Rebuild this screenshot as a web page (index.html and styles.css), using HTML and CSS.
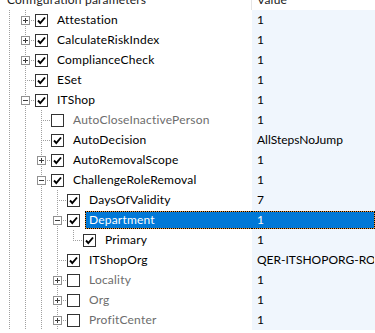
FILE: index.html
```html
<!DOCTYPE html>
<html>
<head>
<meta charset="utf-8">
<link rel="stylesheet" href="styles.css">
</head>
<body>
<div class="grid">
  <div class="row header">
    <div class="c1 hc1">Configuration parameters</div>
    <div class="c2 hc2">Value</div>
  </div>

  <div class="row">
    <div class="c1"><span class="ind v"></span><span class="own t"><svg class="exp" width="9" height="9"><rect x=".5" y=".5" width="8" height="8"/><path d="M2 4.5H7M4.5 2V7"/></svg></span><svg class="cb" width="13" height="13"><rect x=".5" y=".5" width="12" height="12"/><polyline points="3,6.5 5.3,9 10,3.5"/></svg><span class="lbl">Attestation</span></div>
    <div class="c2"><span class="val">1</span></div>
  </div>
  <div class="row">
    <div class="c1"><span class="ind v"></span><span class="own t"><svg class="exp" width="9" height="9"><rect x=".5" y=".5" width="8" height="8"/><path d="M2 4.5H7M4.5 2V7"/></svg></span><svg class="cb" width="13" height="13"><rect x=".5" y=".5" width="12" height="12"/><polyline points="3,6.5 5.3,9 10,3.5"/></svg><span class="lbl">CalculateRiskIndex</span></div>
    <div class="c2"><span class="val">1</span></div>
  </div>
  <div class="row">
    <div class="c1"><span class="ind v"></span><span class="own t"><svg class="exp" width="9" height="9"><rect x=".5" y=".5" width="8" height="8"/><path d="M2 4.5H7M4.5 2V7"/></svg></span><svg class="cb" width="13" height="13"><rect x=".5" y=".5" width="12" height="12"/><polyline points="3,6.5 5.3,9 10,3.5"/></svg><span class="lbl">ComplianceCheck</span></div>
    <div class="c2"><span class="val">1</span></div>
  </div>
  <div class="row">
    <div class="c1"><span class="ind v"></span><span class="own t"></span><svg class="cb" width="13" height="13"><rect x=".5" y=".5" width="12" height="12"/><polyline points="3,6.5 5.3,9 10,3.5"/></svg><span class="lbl">ESet</span></div>
    <div class="c2"><span class="val">1</span></div>
  </div>
  <div class="row">
    <div class="c1"><span class="ind v"></span><span class="own t"><svg class="exp" width="9" height="9"><rect x=".5" y=".5" width="8" height="8"/><path d="M2 4.5H7"/></svg></span><svg class="cb" width="13" height="13"><rect x=".5" y=".5" width="12" height="12"/><polyline points="3,6.5 5.3,9 10,3.5"/></svg><span class="lbl">ITShop</span></div>
    <div class="c2"><span class="val">1</span></div>
  </div>

  <div class="row">
    <div class="c1"><span class="ind v"></span><span class="ind v"></span><span class="own t"></span><svg class="cb" width="13" height="13"><rect x=".5" y=".5" width="12" height="12"/></svg><span class="lbl dis">AutoCloseInactivePerson</span></div>
    <div class="c2"><span class="val">1</span></div>
  </div>
  <div class="row">
    <div class="c1"><span class="ind v"></span><span class="ind v"></span><span class="own t"></span><svg class="cb" width="13" height="13"><rect x=".5" y=".5" width="12" height="12"/><polyline points="3,6.5 5.3,9 10,3.5"/></svg><span class="lbl">AutoDecision</span></div>
    <div class="c2"><span class="val">AllStepsNoJump</span></div>
  </div>
  <div class="row">
    <div class="c1"><span class="ind v"></span><span class="ind v"></span><span class="own t"><svg class="exp" width="9" height="9"><rect x=".5" y=".5" width="8" height="8"/><path d="M2 4.5H7M4.5 2V7"/></svg></span><svg class="cb" width="13" height="13"><rect x=".5" y=".5" width="12" height="12"/><polyline points="3,6.5 5.3,9 10,3.5"/></svg><span class="lbl">AutoRemovalScope</span></div>
    <div class="c2"><span class="val">1</span></div>
  </div>
  <div class="row">
    <div class="c1"><span class="ind v"></span><span class="ind v"></span><span class="own t"><svg class="exp" width="9" height="9"><rect x=".5" y=".5" width="8" height="8"/><path d="M2 4.5H7"/></svg></span><svg class="cb" width="13" height="13"><rect x=".5" y=".5" width="12" height="12"/><polyline points="3,6.5 5.3,9 10,3.5"/></svg><span class="lbl">ChallengeRoleRemoval</span></div>
    <div class="c2"><span class="val">1</span></div>
  </div>

  <div class="row">
    <div class="c1"><span class="ind v"></span><span class="ind v"></span><span class="ind v"></span><span class="own t"></span><svg class="cb" width="13" height="13"><rect x=".5" y=".5" width="12" height="12"/><polyline points="3,6.5 5.3,9 10,3.5"/></svg><span class="lbl">DaysOfValidity</span></div>
    <div class="c2"><span class="val">7</span></div>
  </div>
  <div class="row">
    <div class="c1"><span class="ind v"></span><span class="ind v"></span><span class="ind v"></span><span class="own t"><svg class="exp" width="9" height="9"><rect x=".5" y=".5" width="8" height="8"/><path d="M2 4.5H7"/></svg></span><svg class="cb" width="13" height="13"><rect x=".5" y=".5" width="12" height="12"/><polyline points="3,6.5 5.3,9 10,3.5"/></svg><span class="lbl sel">Department</span></div>
    <div class="c2"><span class="val sel">1</span></div>
  </div>
  <div class="row">
    <div class="c1"><span class="ind v"></span><span class="ind v"></span><span class="ind v"></span><span class="ind v"></span><span class="own l"></span><svg class="cb" width="13" height="13"><rect x=".5" y=".5" width="12" height="12"/><polyline points="3,6.5 5.3,9 10,3.5"/></svg><span class="lbl">Primary</span></div>
    <div class="c2"><span class="val">1</span></div>
  </div>
  <div class="row">
    <div class="c1"><span class="ind v"></span><span class="ind v"></span><span class="ind v"></span><span class="own t"></span><svg class="cb" width="13" height="13"><rect x=".5" y=".5" width="12" height="12"/><polyline points="3,6.5 5.3,9 10,3.5"/></svg><span class="lbl">ITShopOrg</span></div>
    <div class="c2"><span class="val">QER-ITSHOPORG-ROLE-DEPARTMENT</span></div>
  </div>
  <div class="row">
    <div class="c1"><span class="ind v"></span><span class="ind v"></span><span class="ind v"></span><span class="own t"><svg class="exp" width="9" height="9"><rect x=".5" y=".5" width="8" height="8"/><path d="M2 4.5H7M4.5 2V7"/></svg></span><svg class="cb" width="13" height="13"><rect x=".5" y=".5" width="12" height="12"/></svg><span class="lbl dis">Locality</span></div>
    <div class="c2"><span class="val">1</span></div>
  </div>
  <div class="row">
    <div class="c1"><span class="ind v"></span><span class="ind v"></span><span class="ind v"></span><span class="own t"><svg class="exp" width="9" height="9"><rect x=".5" y=".5" width="8" height="8"/><path d="M2 4.5H7M4.5 2V7"/></svg></span><svg class="cb" width="13" height="13"><rect x=".5" y=".5" width="12" height="12"/></svg><span class="lbl dis">Org</span></div>
    <div class="c2"><span class="val">1</span></div>
  </div>
  <div class="row">
    <div class="c1"><span class="ind v"></span><span class="ind v"></span><span class="ind v"></span><span class="own t"><svg class="exp" width="9" height="9"><rect x=".5" y=".5" width="8" height="8"/><path d="M2 4.5H7M4.5 2V7"/></svg></span><svg class="cb" width="13" height="13"><rect x=".5" y=".5" width="12" height="12"/></svg><span class="lbl dis">ProfitCenter</span></div>
    <div class="c2"><span class="val">1</span></div>
  </div>
</div>
</body>
</html>
```

FILE: styles.css
```css
html, body {
  margin: 0;
  padding: 0;
  background: #ffffff;
  overflow: hidden;
}
body {
  font-family: "Segoe UI", Lato, "Noto Sans", sans-serif;
  font-size: 12px;
  letter-spacing: 0.2px;
  color: #000000;
}
.grid {
  margin-top: -10px;
}
.row {
  display: flex;
  height: 20px;
  line-height: 20px;
}
.c1 {
  box-sizing: border-box;
  width: 252px;
  flex: none;
  display: flex;
  align-items: flex-start;
  padding-left: 1px;
  white-space: nowrap;
  overflow: hidden;
}
.c2 {
  flex: 1;
  min-width: 0;
  background: #f0f6fd;
  white-space: nowrap;
  overflow: hidden;
  display: flex;
}
.hc1 {
  padding-left: 7px;
  border-right: 1px solid #e5e5e5;
  color: #1a1a1a;
}
.hc2 {
  background: #ffffff;
  padding-left: 5px;
  color: #1a1a1a;
}
.ind {
  flex: none;
  width: 16px;
  height: 20px;
}
.own {
  flex: none;
  width: 18px;
  height: 20px;
}
.v {
  background: repeating-linear-gradient(to bottom, #a0a0a0 0 1px, transparent 1px 2px) 8px 0 / 1px 20px no-repeat;
}
.t {
  background:
    repeating-linear-gradient(to right, #a0a0a0 0 1px, transparent 1px 2px) 8px 10px / 10px 1px no-repeat,
    repeating-linear-gradient(to bottom, #a0a0a0 0 1px, transparent 1px 2px) 8px 0 / 1px 20px no-repeat;
}
.l {
  background:
    repeating-linear-gradient(to right, #a0a0a0 0 1px, transparent 1px 2px) 8px 10px / 10px 1px no-repeat,
    repeating-linear-gradient(to bottom, #a0a0a0 0 1px, transparent 1px 2px) 8px 0 / 1px 10px no-repeat;
}
.exp {
  display: block;
  margin: 6px 0 0 4px;
  shape-rendering: crispEdges;
}
.exp rect {
  fill: #ffffff;
  stroke: #919191;
}
.exp path {
  stroke: #3c3c3c;
  stroke-width: 1;
  fill: none;
}
.cb {
  display: block;
  flex: none;
  margin-top: 4px;
}
.cb rect {
  fill: #ffffff;
  stroke: #333333;
  shape-rendering: crispEdges;
}
.cb polyline {
  fill: none;
  stroke: #000000;
  stroke-width: 1.9;
}
.lbl {
  box-sizing: border-box;
  height: 18px;
  margin-top: 1px;
  margin-left: 5px;
  padding-left: 3px;
  padding-right: 3px;
  border: 1px solid transparent;
  line-height: 16px;
}
.dis {
  color: #6d6d6d;
}
.val {
  box-sizing: border-box;
  flex: 1;
  height: 18px;
  margin-top: 1px;
  padding-left: 5px;
  border: 1px solid transparent;
  border-left: 0;
  line-height: 16px;
  overflow: hidden;
  letter-spacing: 0;
}
.sel {
  color: #ffffff;
  border: 1px dotted #000000;
  background:
    linear-gradient(#0078d7, #0078d7) padding-box,
    linear-gradient(#f39a3a, #f39a3a) border-box;
}
.lbl.sel {
  flex: 1;
  border-right: 0;
}
.val.sel {
  border-left: 0;
}
```
